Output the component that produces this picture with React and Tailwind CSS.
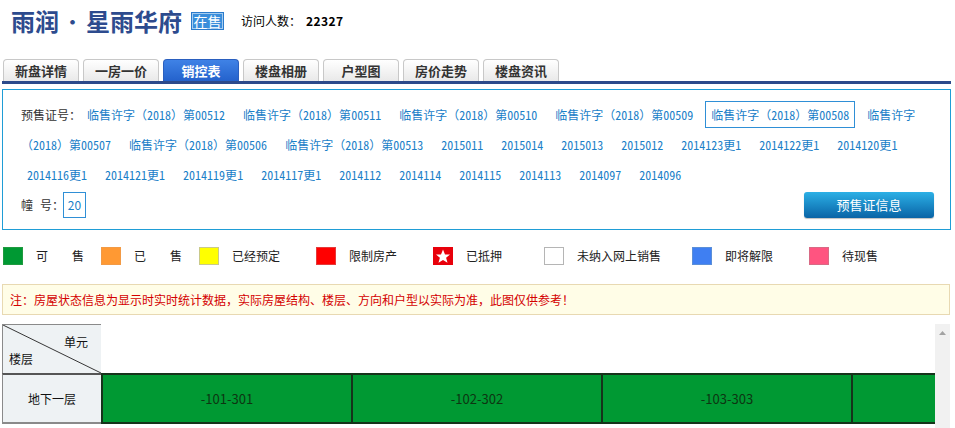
import React from 'react';

const certs = [
  '临售许字（2018）第00512',
  '临售许字（2018）第00511',
  '临售许字（2018）第00510',
  '临售许字（2018）第00509',
  '临售许字（2018）第00508',
  '临售许字（2018）第00507',
  '临售许字（2018）第00506',
  '临售许字（2018）第00513',
  '2015011',
  '2015014',
  '2015013',
  '2015012',
  '2014123更1',
  '2014122更1',
  '2014120更1',
  '2014116更1',
  '2014121更1',
  '2014119更1',
  '2014117更1',
  '2014112',
  '2014114',
  '2014115',
  '2014113',
  '2014097',
  '2014096',
];

const tabs = ['新盘详情', '一房一价', '销控表', '楼盘相册', '户型图', '房价走势', '楼盘资讯'];

// digits in half-width form so they take 6px at 12px
function Digits({ text }) {
  return text.split(/(\d+)/).map((p, i) =>
    /\d/.test(p) ? (
      <span key={i} className="[font-feature-settings:'hwid']">
        {p}
      </span>
    ) : (
      p
    )
  );
}

function Star() {
  return (
    <svg viewBox="0 0 20 18" className="w-[20px] h-[18px]">
      <rect width="20" height="18" fill="#e8000b" />
      <polygon
        points="10,2.5 12,7.4 17,7.6 13.1,10.8 14.5,15.8 10,13 5.5,15.8 6.9,10.8 3,7.6 8,7.4"
        fill="#fff"
      />
    </svg>
  );
}

const legend = [
  { w: 'w-[98px]', box: 'bg-[#009933] border border-[#1f9a3f]', label: '可　　售' },
  { w: 'w-[98px]', box: 'bg-[#ff9933] border border-[#f29a45]', label: '已　　售' },
  { w: 'w-[117px]', box: 'bg-[#ffff00] border border-[#c9c98a]', label: '已经预定' },
  { w: 'w-[117px]', box: 'bg-[#ff0000] border border-[#e43a3a]', label: '限制房产' },
  { w: 'w-[111px]', star: true, label: '已抵押' },
  { w: 'w-[148px]', box: 'bg-white border border-[#b5b5b5]', label: '未纳入网上销售' },
  { w: 'w-[117px]', box: 'bg-[#3f7ff2] border border-[#5b8fd8]', label: '即将解限' },
  { w: 'w-[120px]', box: 'bg-[#ff5480] border border-[#d86a85]', label: '待现售' },
];

const rooms = ['-101-301', '-102-302', '-103-303', ''];

export default function App() {
  return (
    <div className="w-[955px] h-[428px] overflow-hidden bg-white text-[12px] text-[#333] font-['Noto_Sans_CJK_SC',sans-serif]">
      {/* header */}
      <div className="flex items-center h-[42px] pl-[11px]">
        <h1 className="flex items-center text-[24px] leading-none font-bold text-[#2d4b8e]">
          <span>雨润</span>
          <span className="inline-block w-[27px] text-center text-[18px]">·</span>
          <span>星雨华府</span>
        </h1>
        <span className="ml-[9px] flex items-center justify-center w-[33px] h-[18px] text-[14px] leading-none text-white bg-[#3a8edb] border border-[#2a7bcc] shadow-[inset_0_0_0_1px_rgba(255,255,255,0.55)]">
          在售
        </span>
        <span className="ml-[17px] text-black">访问人数：</span>
        <span className="ml-[5px] font-bold text-black text-[12px] tracking-[0.4px]">22327</span>
      </div>

      {/* tabs */}
      <div className="mt-[17px] flex gap-[4px] pl-[3px] h-[22px]">
        {tabs.map((t) =>
          t === '销控表' ? (
            <div
              key={t}
              className="w-[76px] flex items-center justify-center rounded-t-[4px] bg-gradient-to-b from-[#3f82e6] to-[#2462cc] border border-b-0 border-[#2a5fbf] text-white text-[13px] font-bold"
            >
              {t}
            </div>
          ) : (
            <div
              key={t}
              className="w-[76px] flex items-center justify-center rounded-t-[4px] bg-gradient-to-b from-white to-[#e9e9e9] border border-b-0 border-[#c8c8c8] text-[#333] text-[13px] font-bold"
            >
              {t}
            </div>
          )
        )}
      </div>
      <div className="ml-[2px] w-[949px] h-[3px] bg-[#2c4a8b]" />

      {/* presale box */}
      <div className="mt-[5px] ml-[2px] w-[949px] border border-[#1f9dd6] pl-[18px] pt-[10px] pb-[9px]">
        <div className="pr-[30px] leading-[30px]">
          <span>预售证号：</span>
          {certs.map((c, i) => (
            <React.Fragment key={c}>
              {i > 0 && <wbr />}
              <a
                className={
                  'px-[5px] py-[4px] mr-[6px] border cursor-pointer text-[#1a80c8] ' +
                  (i === 4 ? 'border-[#2f8fd6]' : 'border-transparent')
                }
              >
                <Digits text={c} />
              </a>
            </React.Fragment>
          ))}
        </div>
        <div className="flex items-center justify-between h-[30px] pr-[16px]">
          <div className="flex items-center">
            <span className="mr-[7px]">幢</span>
            <span>号：</span>
            <span className="ml-[-1px] flex items-center justify-center w-[23px] h-[26px] border border-[#2f8fd6] text-[#1a80c8]">
              20
            </span>
          </div>
          <button className="w-[130px] h-[26px] rounded-[3px] bg-gradient-to-b from-[#2cb0e6] to-[#0a64a6] text-white text-[13px] shadow-[0_1px_1px_rgba(0,0,0,0.25)]">
            预售证信息
          </button>
        </div>
      </div>

      {/* legend */}
      <div className="mt-[17px] flex items-center h-[18px] pl-[3px]">
        {legend.map((l) => (
          <div key={l.label} className={l.w + ' shrink-0 flex items-center'}>
            {l.star ? <Star /> : <span className={'w-[20px] h-[18px] ' + l.box} />}
            <span className="ml-[13px] text-[#222]">{l.label}</span>
          </div>
        ))}
      </div>

      {/* notice */}
      <div className="mt-[19px] ml-[2px] w-[948px] h-[31px] flex items-center pl-[7px] bg-[#fffde7] border border-[#e8d9b2] text-[#d40000]">
        注：房屋状态信息为显示时实时统计数据，实际房屋结构、楼层、方向和户型以实际为准，此图仅供参考！
      </div>

      {/* sales table */}
      <div className="mt-[9px] ml-[2px] flex">
        <div className="w-[933px] overflow-hidden">
          <div className="flex h-[49px]">
            <div className="relative w-[99px] shrink-0 bg-[#eef2f4] border-l border-t border-[#8a8a8a]">
              <svg className="absolute inset-0 w-full h-full" preserveAspectRatio="none" viewBox="0 0 99 49">
                <line x1="0" y1="0" x2="99" y2="49" stroke="#333" strokeWidth="1" />
              </svg>
              <span className="absolute right-[13px] top-[8px] text-[#111]">单元</span>
              <span className="absolute left-[6px] bottom-[5px] text-[#111]">楼层</span>
            </div>
          </div>
          <div className="flex h-[51px]">
            <div className="w-[99px] shrink-0 flex items-center justify-center bg-[#eef2f4] border-l border-[#8a8a8a] border-t-2 border-t-[#555] border-b-2 border-b-[#8a8a8a] text-[#111]">
              地下一层
            </div>
            {rooms.map((r, i) => (
              <div
                key={i}
                className="w-[250px] shrink-0 flex items-center justify-center bg-[#009933] border-l-2 border-t-2 border-b-2 border-[#16331b] text-[13px] text-[#0d3512]"
              >
                {r}
              </div>
            ))}
          </div>
        </div>
        <div className="w-[15px] h-[104px] shrink-0 bg-[#f1f1f1] flex justify-center pt-[7px]">
          <svg viewBox="0 0 7 4" className="w-[7px] h-[4px]">
            <polygon points="3.5,0 7,4 0,4" fill="#a3a3a3" />
          </svg>
        </div>
      </div>
    </div>
  );
}
